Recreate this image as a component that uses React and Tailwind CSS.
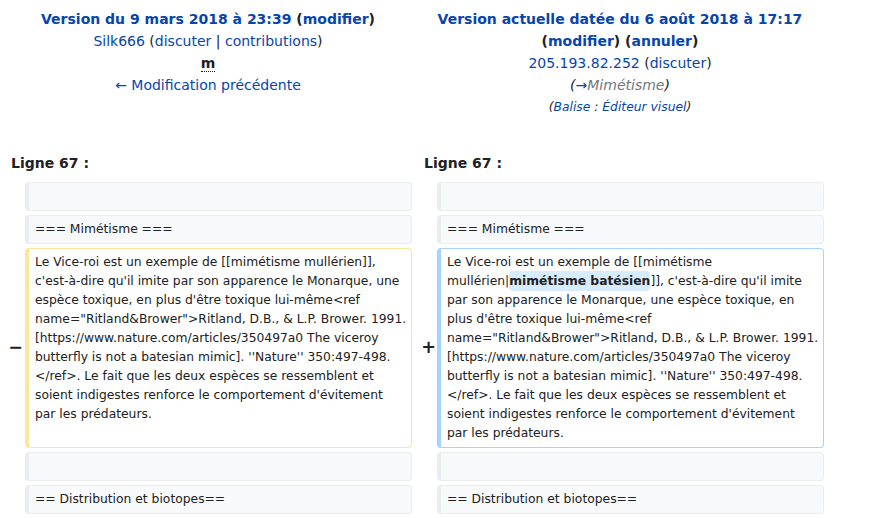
const FONT = "font-['DejaVu_Sans',sans-serif]";

function Ctx({ children }) {
  return (
    <div className="rounded-[4px] border border-l-4 border-[#eaecf0] bg-[#f8f9fa] px-[6px] py-[4px] text-[12.32px] leading-[19px] text-[#202122]">
      {children || '\u00a0'}
    </div>
  );
}

function Marker({ children, shift }) {
  return (
    <div className={`self-center text-right text-[17.5px] font-bold leading-none text-[#202122] ${shift}`}>{children}</div>
  );
}

const A = ({ children }) => <span className="text-[#0645ad]">{children}</span>;

const TAIL = [
  'name="Ritland&Brower">Ritland, D.B., & L.P. Brower. 1991.',
  '[https://www.nature.com/articles/350497a0 The viceroy',
  "butterfly is not a batesian mimic]. ''Nature'' 350:497-498.",
  '</ref>. Le fait que les deux espèces se ressemblent et',
  "soient indigestes renforce le comportement d'évitement",
  'par les prédateurs.',
];

function Lines({ lines }) {
  return lines.map((l, i) => (
    <div key={i}>{l}</div>
  ));
}

export default function App() {
  return (
    <div className={`${FONT} min-h-[518px] w-[874px] bg-white pl-[4px] pt-[8px] text-[14px] text-[#202122]`}>
      <div className="grid grid-cols-[17px_387px_17px_387px] gap-[4px]">
        {/* headers */}
        <div className="col-span-2 text-center leading-[22px]">
          <div className="font-bold">
            <A>Version du 9 mars 2018 à 23:39</A> (<A>modifier</A>)
          </div>
          <div>
            <A>Silk666</A> (<A>discuter</A> | <A>contributions</A>)
          </div>
          <div>
            <abbr className="font-bold no-underline border-b border-dotted border-[#202122]">m</abbr>
          </div>
          <div>
            <A>← Modification précédente</A>
          </div>
        </div>
        <div className="col-span-2 text-center leading-[22px]">
          <div className="font-bold">
            <A>Version actuelle datée du 6 août 2018 à 17:17</A>
          </div>
          <div className="font-bold">
            (<A>modifier</A>) (<A>annuler</A>)
          </div>
          <div>
            <A>205.193.82.252</A> (<A>discuter</A>)
          </div>
          <div className="italic">
            (<A>→</A><span className="text-[#72777d]">Mimétisme</span>)
          </div>
          <div className="text-[12.32px] italic">
            (<A>Balise</A> : <A>Éditeur visuel</A>)
          </div>
        </div>

        {/* line numbers */}
        <div className="col-span-2 mt-[30px] pb-[4px] pl-[7px] font-bold leading-[22px]">Ligne 67 :</div>
        <div className="col-span-2 mt-[30px] pb-[4px] pl-[8px] font-bold leading-[22px]">Ligne 67 :</div>

        <div />
        <Ctx />
        <div />
        <Ctx />

        <div />
        <Ctx>=== Mimétisme ===</Ctx>
        <div />
        <Ctx>=== Mimétisme ===</Ctx>

        <Marker shift="-mr-[2px]">−</Marker>
        <div className="whitespace-nowrap rounded-[4px] border border-l-4 border-[#ffe49c] bg-white px-[6px] py-[4px] text-[12.32px] leading-[19px] text-[#202122]">
          <div>Le Vice-roi est un exemple de [[mimétisme mullérien]],</div>
          <div>c'est-à-dire qu'il imite par son apparence le Monarque, une</div>
          <div>espèce toxique, en plus d'être toxique lui-même&lt;ref</div>
          <Lines lines={TAIL} />
        </div>
        <Marker shift="-mr-[3px]">+</Marker>
        <div className="whitespace-nowrap rounded-[4px] border border-l-4 border-[#a3d3ff] bg-white px-[6px] py-[4px] text-[12.32px] leading-[19px] text-[#202122]">
          <div>Le Vice-roi est un exemple de [[mimétisme</div>
          <div>
            mullérien|<span className="rounded-[4px] bg-[#d8ecff] py-[3px] font-bold">mimétisme batésien</span>]], c'est-à-dire qu'il imite
          </div>
          <div>par son apparence le Monarque, une espèce toxique, en</div>
          <div>plus d'être toxique lui-même&lt;ref</div>
          <Lines lines={TAIL} />
        </div>

        <div />
        <Ctx />
        <div />
        <Ctx />

        <div />
        <Ctx>== Distribution et biotopes==</Ctx>
        <div />
        <Ctx>== Distribution et biotopes==</Ctx>
      </div>
    </div>
  );
}
